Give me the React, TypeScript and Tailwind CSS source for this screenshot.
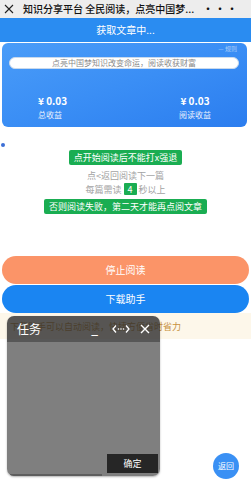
import React from "react";

export default function App() {
  const font = { fontFamily: '"Noto Sans CJK SC", "Noto Sans", sans-serif' };
  return (
    <div className="relative w-[251px] h-[499px] bg-white overflow-hidden" style={font}>
      {/* Title bar */}
      <div className="h-[18px] bg-[#ededed] flex items-center px-[4px] text-[#111]">
        <svg width="10" height="10" viewBox="0 0 10 10" className="shrink-0">
          <path d="M1 1 L9 9 M9 1 L1 9" stroke="#222" strokeWidth="1.1" />
        </svg>
        <div className="ml-[9px] text-[10px] font-medium leading-none whitespace-nowrap">知识分享平台 全民阅读，点亮中国梦...</div>
        <div className="ml-auto mr-[9px] text-[12px] leading-none">···</div>
      </div>
      {/* Loading bar */}
      <div className="h-[24px] bg-[#2a8cf1] flex items-center justify-center text-white text-[10px] leading-none">
        获取文章中...
      </div>
      {/* Card */}
      <div className="relative ml-[2px] mr-[4px] mt-[1px] h-[84px] rounded-[6px] bg-gradient-to-br from-[#4a9cf8] via-[#3a8ef5] to-[#2b7def] overflow-hidden">
        <div className="absolute right-[10px] top-[2px] text-[6px] text-[#a9cdf9] leading-[7px]">— 规则</div>
        <div className="mt-[14px] ml-[7px] mr-[8px] h-[12px] rounded-full bg-white border border-[#c9d9ec] flex items-center justify-center text-[8px] text-[#8a8a8a] leading-none">
          点亮中国梦知识改变命运，阅读收获财富
        </div>
        <div className="mt-[27px] flex justify-between pl-[36px] pr-[36px] text-white">
          <div className="flex flex-col">
            <div className="text-[10px] font-bold leading-none">¥ 0.03</div>
            <div className="mt-[5px] text-[8px] leading-none opacity-90">总收益</div>
          </div>
          <div className="flex flex-col items-center">
            <div className="text-[10px] font-bold leading-none">¥ 0.03</div>
            <div className="mt-[5px] text-[8px] leading-none opacity-90">阅读收益</div>
          </div>
        </div>
      </div>
      {/* dot */}
      <div className="mt-[16px] ml-[1px] w-[4px] h-[4px] rounded-full bg-[#3d6fd6]" />
      {/* instructions */}
      <div className="mt-[3px] flex flex-col items-center">
        <div className="h-[15px] px-[5px] bg-[#1aad52] rounded-[2px] flex items-center text-white text-[9px] leading-none">
          点开始阅读后不能打x强退
        </div>
        <div className="mt-[6px] text-[9px] text-[#a3a3a3] leading-none">点&lt;返回阅读下一篇</div>
        <div className="mt-[3px] flex items-center text-[9px] text-[#a3a3a3] leading-none">
          <span>每篇需读</span>
          <span className="mx-[2px] w-[13px] h-[12px] bg-[#1aad52] text-white flex items-center justify-center rounded-[1px]">4</span>
          <span>秒以上</span>
        </div>
        <div className="mt-[4px] h-[15px] px-[5px] bg-[#1aad52] rounded-[2px] flex items-center text-white text-[9px] leading-none">
          否则阅读失败，第二天才能再点阅文章
        </div>
      </div>
      {/* buttons */}
      <div className="mt-[42px] px-[2px] flex flex-col gap-[1px]">
        <div className="h-[28px] rounded-full bg-[#fb9468] flex items-center justify-center text-white text-[10px] leading-none">
          停止阅读
        </div>
        <div className="h-[28px] rounded-full bg-[#1a85f2] flex items-center justify-center text-white text-[10px] leading-none">
          下载助手
        </div>
      </div>
      {/* banner */}
      <div className="h-[26px] bg-[#fdf7ea] flex items-center pl-[10px] text-[9px] text-[#c8903e] leading-none">
        下载助手可以自动阅读，快捷方便省时省力
      </div>

      {/* Task popup */}
      <div className="absolute left-[7px] top-[316px] w-[153px] h-[160px] rounded-[7px] overflow-hidden flex flex-col shadow-[0_1px_2px_rgba(0,0,0,0.3)]">
        <div className="h-[26px] bg-[rgba(40,40,40,0.78)] flex items-center px-[10px] text-white">
          <span className="text-[12px] leading-none">任务</span>
          <span className="ml-auto mr-[14px] text-[12px] leading-none font-bold">_</span>
          <svg width="18" height="10" viewBox="0 0 18 10" className="mr-[10px]">
            <path d="M4 1.5 L1 5 L4 8.5 M14 1.5 L17 5 L14 8.5" stroke="white" strokeWidth="1.3" fill="none" />
            <circle cx="6.5" cy="5" r="0.8" fill="white" />
            <circle cx="9" cy="5" r="0.8" fill="white" />
            <circle cx="11.5" cy="5" r="0.8" fill="white" />
          </svg>
          <svg width="10" height="10" viewBox="0 0 10 10">
            <path d="M1 1 L9 9 M9 1 L1 9" stroke="white" strokeWidth="1.4" />
          </svg>
        </div>
        <div className="flex-1 relative bg-[#7f7f7f]">
          <div className="absolute right-[2px] bottom-[3px] w-[51px] h-[19px] bg-[#262626] flex items-center justify-center text-white text-[9px] leading-none">
            确定
          </div>
          <div className="absolute left-[3px] bottom-[0px] w-[92px] h-[2px] bg-[#5e5e5e]" />
        </div>
      </div>

      {/* back button */}
      <div className="absolute left-[213px] top-[453px] w-[26px] h-[26px] rounded-full bg-[#3a90f4] flex items-center justify-center text-white text-[8px] leading-none">
        返回
      </div>
    </div>
  );
}
